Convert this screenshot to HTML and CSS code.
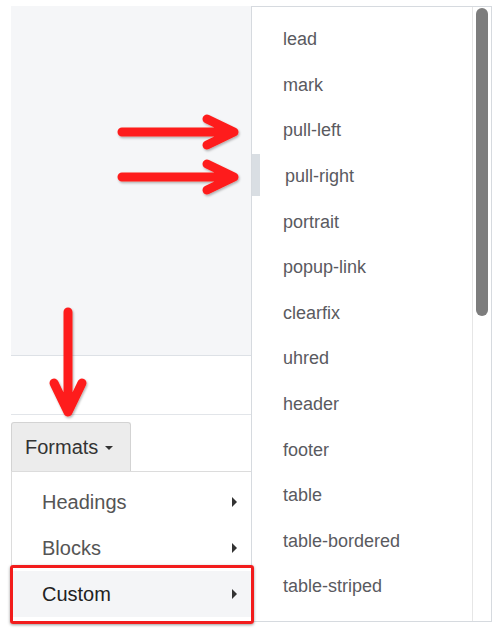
FILE: index.html
```html
<!DOCTYPE html>
<html>
<head>
<meta charset="utf-8">
<link rel="stylesheet" href="styles.css">
</head>
<body>
<div class="page">
  <div class="editor">
    <div class="canvas"></div>
    <div class="blank"></div>
    <div class="toolbar">
      <div class="btn">Formats <span class="caret-down"></span></div>
    </div>
    <div class="menu">
      <div class="item"><span>Headings</span><span class="caret-right"></span></div>
      <div class="item"><span>Blocks</span><span class="caret-right"></span></div>
      <div class="item active"><span>Custom</span><span class="caret-right"></span></div>
    </div>
  </div>

  <div class="submenu">
    <div class="list">
      <div class="sitem">lead</div>
      <div class="sitem">mark</div>
      <div class="sitem">pull-left</div>
      <div class="sitem hover">pull-right</div>
      <div class="sitem">portrait</div>
      <div class="sitem">popup-link</div>
      <div class="sitem">clearfix</div>
      <div class="sitem">uhred</div>
      <div class="sitem">header</div>
      <div class="sitem">footer</div>
      <div class="sitem">table</div>
      <div class="sitem">table-bordered</div>
      <div class="sitem">table-striped</div>
    </div>
    <div class="track"><div class="thumb"></div></div>
  </div>

  <div class="redbox"></div>

  <svg class="arrows" width="498" height="633" viewBox="0 0 498 633">
    <defs>
      <filter id="sh" x="-20%" y="-20%" width="140%" height="140%">
        <feDropShadow dx="1" dy="1.5" stdDeviation="1" flood-color="#000" flood-opacity="0.3"/>
      </filter>
    </defs>
    <g fill="none" stroke="#fe1f1a" stroke-width="9" stroke-linecap="round" stroke-linejoin="round" filter="url(#sh)">
      <path d="M122 132 H232 M207 119 L234 132 L207 145"/>
      <path d="M122 177 H232 M207 164 L234 177 L207 190"/>
      <path d="M68 312 V408 M54 383 L68 412 L82 383"/>
    </g>
  </svg>
</div>
</body>
</html>
```

FILE: styles.css
```css
html, body {
  margin: 0;
  padding: 0;
  background: #ffffff;
}

body {
  font-family: "Liberation Sans", Arial, sans-serif;
  width: 498px;
  height: 633px;
  overflow: hidden;
}

.page {
  position: relative;
  width: 498px;
  height: 633px;
  padding: 6px 0 0 11px;
  box-sizing: border-box;
}

.editor {
  width: 240px;
}

.canvas {
  height: 349px;
  background: #f5f6f8;
  border-bottom: 1px solid #dde1e6;
}

.blank {
  height: 58px;
  border-bottom: 1px solid #e2e5e9;
}

.toolbar {
  display: flex;
  padding-top: 7px;
}

.btn {
  box-sizing: border-box;
  width: 120px;
  height: 49px;
  display: flex;
  align-items: center;
  gap: 7px;
  padding-left: 13px;
  background: #ececec;
  border: 1px solid #d3d3d3;
  border-bottom: none;
  border-radius: 3px 3px 0 0;
  font-size: 20px;
  color: #333;
}

.caret-down {
  width: 0;
  height: 0;
  border-left: 4px solid transparent;
  border-right: 4px solid transparent;
  border-top: 4px solid #333;
  margin-top: 2px;
}

.menu {
  border-left: 1px solid #dcdcdc;
  border-top: 1px solid #dcdcdc;
  padding-top: 7px;
}

.item {
  height: 46px;
  display: flex;
  align-items: center;
  justify-content: space-between;
  padding: 0 14px 0 30px;
  font-size: 20px;
  color: #555;
}

.item.active {
  background: #f4f5f7;
  color: #222;
}

.caret-right {
  width: 0;
  height: 0;
  border-top: 5px solid transparent;
  border-bottom: 5px solid transparent;
  border-left: 5px solid #333;
}

.submenu {
  position: absolute;
  left: 251px;
  top: 6px;
  width: 241px;
  height: 616px;
  box-sizing: border-box;
  border: 1px solid #d6dadf;
  background: #fff;
  display: flex;
}

.list {
  flex: 1;
  padding-top: 10px;
}

.sitem {
  height: 45.6px;
  display: flex;
  align-items: center;
  padding-left: 31px;
  font-size: 18px;
  color: #5a5a5f;
}

.sitem.hover {
  padding-left: 33px;
  background: linear-gradient(to right, #d9dee3 8px, transparent 8px) no-repeat 0 0 / 100% 42px;
}

.track {
  width: 19px;
  box-sizing: border-box;
  border-left: 1px solid #e6e6e6;
  padding: 1px 3px 0 3px;
}

.thumb {
  height: 308px;
  border-radius: 6px;
  background: #7d7d7d;
}

.redbox {
  position: absolute;
  left: 10px;
  top: 565px;
  width: 244px;
  height: 59px;
  box-sizing: border-box;
  border: 3px solid #f21c1c;
  border-radius: 3px;
  box-shadow: 0 1px 3px rgba(0, 0, 0, 0.4);
}

.arrows {
  position: absolute;
  left: 0;
  top: 0;
  pointer-events: none;
}
```
